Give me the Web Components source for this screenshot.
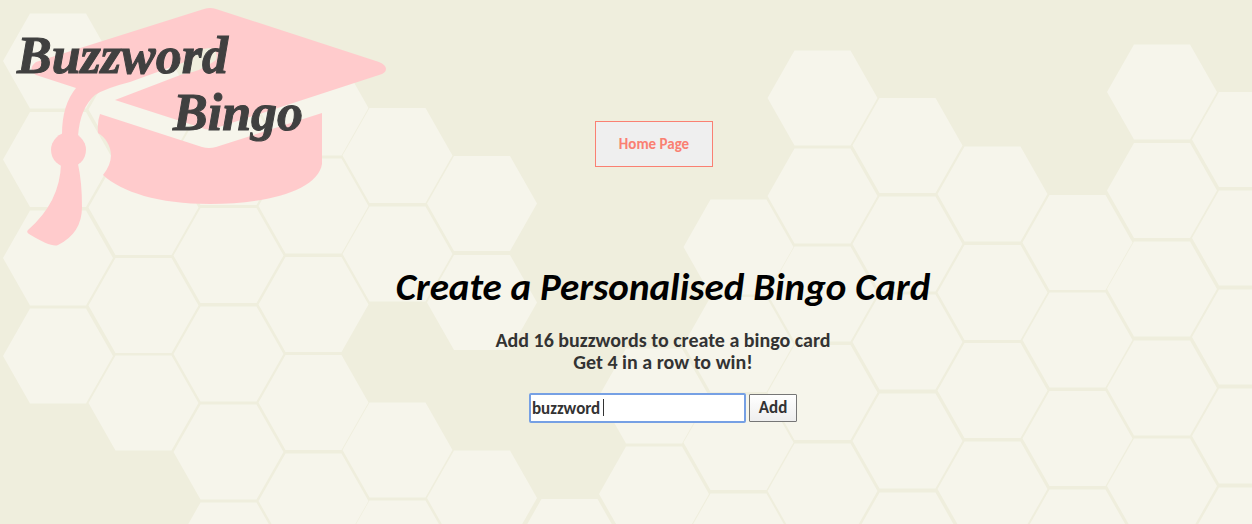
<!DOCTYPE html>
<html lang="en">
<head>
<meta charset="utf-8">
<title>Buzzword Bingo</title>
<style>
  body { margin: 0; background: #efeedd; font-family: Calibri, Carlito, Lato, sans-serif; }
</style>
</head>
<body>
<bingo-page>
  <bingo-logo slot="logo"></bingo-logo>
  <home-button slot="nav">Home Page</home-button>
  <card-creator>
    <span slot="title">Create a Personalised Bingo Card</span>
    <span slot="rules">Add 16 buzzwords to create a bingo card<br>Get 4 in a row to win!</span>
  </card-creator>
</bingo-page>
<script>
function shadow(el, html) {
  const root = el.attachShadow({ mode: 'open' });
  root.innerHTML = html;
  return root;
}

/* Honeycomb backdrop: each column is a centre x and the centre y of each cell */
class HoneyComb extends HTMLElement {
  constructor() {
    super();
    const columns = [
      [58, 61, 159.5, 258, 356],
      [143.5, 109.5, 207.5, 305.5, 403],
      [228.5, 157.5, 255.5, 354, 452, 550],
      [313.5, 108, 206, 304.5, 402.5, 501],
      [397.5, 155.5, 254, 450, 548],
      [482, 203.5, 302.5, 498],
      [569.5, 546.5],
      [654, 396, 494],
      [738.5, 247, 344.5, 442.5, 541],
      [822.5, 98, 196, 294, 392.5, 491],
      [907.5, 145.5, 244, 342, 441, 540],
      [992.5, 194, 292.5, 390.5, 489],
      [1077.5, 242.5, 340, 438.5, 537],
      [1162, 92, 190.5, 289, 388, 486],
      [1247, 139.5, 238, 337, 436, 535]
    ];
    let d = '';
    for (const [x, ...ys] of columns)
      for (const y of ys)
        d += `M${x - 55} ${y}l27 -47.500h56l27 47.500l-27 47.500h-56z`;
    shadow(this, `
      <style>
        :host { display: block; position: absolute; inset: 0; overflow: hidden; z-index: -1; }
        svg { display: block; width: 100%; height: 100%; }
      </style>
      <svg aria-hidden="true"><path d="${d}" fill="#f6f5eb"/></svg>`);
  }
}
customElements.define('honey-comb', HoneyComb);

class BingoLogo extends HTMLElement {
  constructor() {
    super();
    shadow(this, `
      <style>
        :host { display: block; }
        svg { display: block; }
        text { font: italic bold 52px "Brush Script MT", "Liberation Serif", serif; fill: #404040; stroke: #404040; stroke-width: 1; }
      </style>
      <svg width="388" height="248" viewBox="0 0 388 248" role="img" aria-label="Buzzword Bingo">
        <g fill="#ffcbcc">
          <path d="M204 9Q210 7 216 9L379 62Q386 65 386 69T379 75L216 128Q209 131 202 128L115 100L183 74Q200 72 216 60Q219 49 209 48Q196 49 193 59L130 82Q106 88 95 95Q80 108 78 136L62 134Q62 105 76 88L36 75Q27 69 36 62Z"/>
          <circle cx="68.500" cy="150" r="17.500"/>
          <path d="M61 164Q60 202 28 230Q26 232 29 234Q52 248 58 245Q82 233 82 207Q82 182 78 164Z"/>
          <path d="M100 114L202 147Q209 149 216 147L322 113V164C318 190 268 204 210 204C158 204 122 192 103 175Q111 165 111 155C111 146 105 137 98 133Q97 122 100 114Z"/>
        </g>
        <text x="17" y="73">Buzzword</text>
        <text x="173" y="130">Bingo</text>
      </svg>`);
  }
}
customElements.define('bingo-logo', BingoLogo);

class HomeButton extends HTMLElement {
  constructor() {
    super();
    shadow(this, `
      <style>
        :host { display: block; }
        button { display: block; width: 118px; height: 46px; padding: 0; border: 1px solid salmon;
          background: #efefef; color: salmon; font: bold 15px/20px Calibri, Carlito, Lato, sans-serif; }
      </style>
      <button type="button"><slot></slot></button>`);
  }
}
customElements.define('home-button', HomeButton);

class CardCreator extends HTMLElement {
  constructor() {
    super();
    shadow(this, `
      <style>
        :host { display: block; text-align: center; color: #333; }
        h1 { margin: 0; font: italic bold 39px/44px Calibri, Carlito, Lato, sans-serif; color: #000; }
        p { margin: 20px 0; font-size: 20px; line-height: 22px; font-weight: bold; }
        form { display: flex; justify-content: center; align-items: center; gap: 3px; }
        .field { position: relative; }
        input, button { display: block; box-sizing: border-box; margin: 0; color: #333;
          font: bold 17px/20px Calibri, Carlito, Lato, sans-serif; }
        input { width: 217px; height: 30px; padding: 2px 1px; border: 2px solid #76a0e4; border-radius: 2px;
          background: #fff; outline: none; }
        .caret { position: absolute; left: 74px; top: 6px; width: 1px; height: 17px; background: #333; }
        .typed input { caret-color: #333; }
        .field:not(.typed) input { caret-color: transparent; }
        .typed .caret { display: none; }
        button { width: 48px; height: 28px; padding: 0; border: 1px solid #767676; border-radius: 1px;
          background: linear-gradient(#fff, #eee); }
      </style>
      <h1><slot name="title"></slot></h1>
      <p><slot name="rules"></slot></p>
      <form>
        <div class="field">
          <input type="text" name="buzzword" value="buzzword" aria-label="Buzzword" autocomplete="off" spellcheck="false">
          <span class="caret" aria-hidden="true"></span>
        </div>
        <button type="submit">Add</button>
      </form>`);
  }
  connectedCallback() {
    const root = this.shadowRoot;
    const field = root.querySelector('.field');
    const input = root.querySelector('input');
    root.querySelector('form').addEventListener('submit', e => e.preventDefault());
    for (const type of ['keydown', 'pointerdown', 'blur'])
      input.addEventListener(type, () => field.classList.add('typed'));
    input.focus();
    input.setSelectionRange(input.value.length, input.value.length);
  }
}
customElements.define('card-creator', CardCreator);

class BingoPage extends HTMLElement {
  constructor() {
    super();
    shadow(this, `
      <style>
        :host { display: block; position: relative; z-index: 0; min-height: 100vh; overflow: hidden; }
        header { display: grid; grid-template-columns: 1fr auto 1fr; align-items: start; }
        nav { padding: 121px 0 0 56px; }
        main { padding: 17px 0 24px 74px; }
      </style>
      <honey-comb></honey-comb>
      <header><slot name="logo"></slot><nav><slot name="nav"></slot></nav></header>
      <main><slot></slot></main>`);
  }
}
customElements.define('bingo-page', BingoPage);
</script>
</body>
</html>
